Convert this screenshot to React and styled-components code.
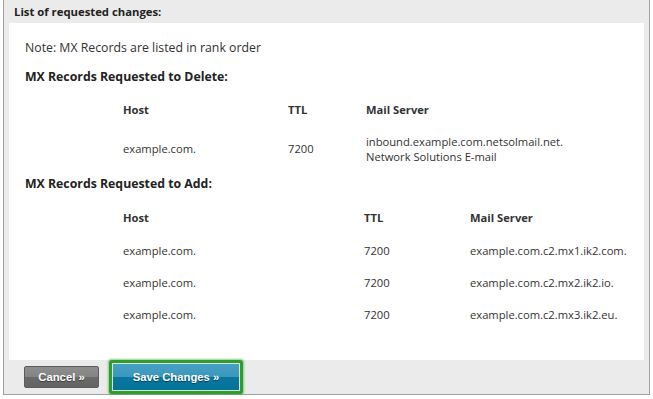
import React from "react";
import styled, { createGlobalStyle } from "styled-components";

const Global = createGlobalStyle`
  body {
    margin: 0;
    background: #fff;
    font-family: "Open Sans", "Liberation Sans", sans-serif;
    color: #333;
  }
`;

const Frame = styled.div`
  margin-left: 3px;
  width: 647px;
  height: 395px;
  background: #ebebeb;
  border: 1px solid #a0a0a0;
  border-top: none;
  display: flex;
  flex-direction: column;
  box-sizing: border-box;
`;

const Title = styled.div`
  height: 23px;
  padding-left: 10px;
  display: flex;
  align-items: center;
  font-size: 11.3px;
  font-weight: 700;
  color: #222;
`;

const Panel = styled.div`
  margin: 0 5px;
  background: #fff;
  height: 337px;
  padding: 17px 16px 0 16px;
  box-sizing: border-box;
`;

const Note = styled.div`
  font-size: 12.3px;
  line-height: 16px;
  color: #333;
`;

const Heading = styled.div`
  font-size: 12.3px;
  font-weight: 700;
  line-height: 16px;
  color: #222;
  margin-top: ${(p) => p.$top}px;
`;

const Table = styled.div`
  display: grid;
  grid-template-columns: ${(p) => p.$cols};
  padding-left: 98px;
  margin-top: ${(p) => p.$top}px;
  font-size: 11.2px;
  line-height: 15px;
`;

const Th = styled.div`
  font-weight: 700;
  color: #333;
  height: ${(p) => p.$h}px;
`;

const Td = styled.div`
  color: #333;
  height: ${(p) => p.$h}px;
  display: flex;
  flex-direction: column;
  justify-content: center;
`;

const Footer = styled.div`
  flex: 1;
  display: flex;
  align-items: center;
  padding-left: 20px;
  gap: 13px;
`;

const Button = styled.button`
  font-family: "Liberation Sans", Arial, sans-serif;
  font-weight: 700;
  font-size: 11.3px;
  color: #fff;
  text-shadow: 0 1px 1px rgba(0, 0, 0, 0.45);
  border-radius: 2px;
  cursor: pointer;
  padding: 0;
`;

const Cancel = styled(Button)`
  width: 75px;
  height: 22px;
  border: 1px solid #5c5c5c;
  background: linear-gradient(#8e8e8e 0%, #848484 50%, #6a6a6a 50%, #646464 100%);
`;

const Save = styled(Button)`
  width: 128px;
  height: 28px;
  border: 1px solid #d8e6d8;
  border-radius: 1px;
  background: linear-gradient(#46a0c4 0%, #3c97bc 50%, #08779f 50%, #06729a 100%);
  box-shadow: 0 0 0 3px #2d9e2d, 0 0 2px 4px rgba(60, 170, 60, 0.55);
`;

const del = [
  { host: "example.com.", ttl: "7200", mail: ["inbound.example.com.netsolmail.net.", "Network Solutions E-mail"] },
];

const add = [
  { host: "example.com.", ttl: "7200", mail: "example.com.c2.mx1.ik2.com." },
  { host: "example.com.", ttl: "7200", mail: "example.com.c2.mx2.ik2.io." },
  { host: "example.com.", ttl: "7200", mail: "example.com.c2.mx3.ik2.eu." },
];

export default function App() {
  return (
    <>
      <Global />
      <Frame>
        <Title>List of requested changes:</Title>
        <Panel>
          <Note>Note: MX Records are listed in rank order</Note>
          <Heading $top={13}>MX Records Requested to Delete:</Heading>
          <Table $cols="165px 78px 1fr" $top={17}>
            <Th $h={26}>Host</Th>
            <Th $h={26}>TTL</Th>
            <Th $h={26}>Mail Server</Th>
            {del.map((r, i) => (
              <React.Fragment key={i}>
                <Td $h={41}>{r.host}</Td>
                <Td $h={41}>{r.ttl}</Td>
                <Td $h={41}>
                  {r.mail.map((m) => (
                    <span key={m}>{m}</span>
                  ))}
                </Td>
              </React.Fragment>
            ))}
          </Table>
          <Heading $top={7}>MX Records Requested to Add:</Heading>
          <Table $cols="241px 106px 1fr" $top={18}>
            <Th $h={24}>Host</Th>
            <Th $h={24}>TTL</Th>
            <Th $h={24}>Mail Server</Th>
            {add.map((r, i) => (
              <React.Fragment key={i}>
                <Td $h={32}>{r.host}</Td>
                <Td $h={32}>{r.ttl}</Td>
                <Td $h={32}>{r.mail}</Td>
              </React.Fragment>
            ))}
          </Table>
        </Panel>
        <Footer>
          <Cancel>Cancel »</Cancel>
          <Save>Save Changes »</Save>
        </Footer>
      </Frame>
    </>
  );
}
